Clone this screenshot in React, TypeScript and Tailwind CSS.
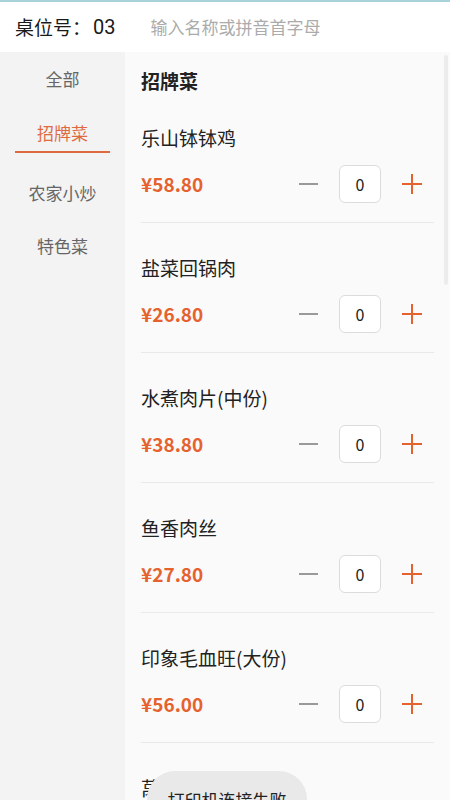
import React from 'react';

const categories = ['全部', '招牌菜', '农家小炒', '特色菜'];

const dishes = [
  { name: '乐山钵钵鸡', price: '58.80' },
  { name: '盐菜回锅肉', price: '26.80' },
  { name: '水煮肉片(中份)', price: '38.80' },
  { name: '鱼香肉丝', price: '27.80' },
  { name: '印象毛血旺(大份)', price: '56.00' },
  { name: '莴笋肉片', price: '32.80' },
];

const font = { fontFamily: '"Noto Sans CJK SC", "Noto Sans", sans-serif' };

export default function App() {
  const active = 1;
  return (
    <div className="relative h-[800px] w-[450px] overflow-hidden bg-[#fafafa]" style={font}>
      {/* Header */}
      <div className="flex h-[52px] items-center border-t-2 border-[#a9d3db] bg-white pl-[15px]">
        <span className="text-[19px] text-[#1a1a1a]">桌位号：</span>
        <span className="ml-[2px] text-[20px] text-[#1a1a1a]" style={{ fontFamily: 'Roboto, sans-serif' }}>03</span>
        <span className="ml-[35px] text-[17px] text-[#ababab]">输入名称或拼音首字母</span>
      </div>

      <div className="flex">
        {/* Category sidebar */}
        <div className="flex h-[748px] w-[125px] shrink-0 flex-col items-center bg-[#f3f3f3]">
          {categories.map((c, i) => (
            <div
              key={c}
              className={`flex h-[53px] w-[95px] items-center justify-center text-[17px] ${
                i === active ? 'text-[#de6a3f]' : 'text-[#666]'
              } ${i === 2 ? 'mt-[8px]' : ''}`}
            >
              {i === active ? (
                <div className="w-[95px] border-b-2 border-[#de6a3f] pt-[10px] pb-[6px] text-center leading-[24px]">
                  {c}
                </div>
              ) : (
                c
              )}
            </div>
          ))}
        </div>

        {/* Dish list */}
        <div className="flex-1 px-4 pt-[17px]">
          <div className="text-[19px] font-bold leading-[24px] text-[#222]">招牌菜</div>
          <div>
            {dishes.map((d) => (
              <div key={d.name} className="border-b border-[#e9e9e9] pt-[33px] pb-[19px]">
                <div className="text-[19px] leading-[24px] text-[#222]">{d.name}</div>
                <div className="mt-[15px] flex h-[38px] items-center">
                  <span className="flex-1 text-[19px] font-bold text-[#e5622f]">¥{d.price}</span>
                  <span className="flex w-[22px] justify-center">
                    <span className="block h-[2px] w-[19px] bg-[#999]" />
                  </span>
                  <div className="ml-[20px] flex h-[38px] w-[42px] items-center justify-center rounded-md border border-[#dcdcdc] bg-white text-[16px] text-[#222]">
                    0
                  </div>
                  <span className="relative ml-[21px] mr-[12px] block h-[20px] w-[20px]">
                    <span className="absolute left-0 top-[9px] block h-[2px] w-[20px] bg-[#e5622f]" />
                    <span className="absolute left-[9px] top-0 block h-[20px] w-[2px] bg-[#e5622f]" />
                  </span>
                </div>
              </div>
            ))}
          </div>
        </div>
      </div>

      {/* Scrollbar */}
      <div className="absolute right-[2px] top-[55px] h-[230px] w-[4px] rounded-full bg-[#ececec]" />

      {/* Toast */}
      <div className="absolute left-[147px] top-[771px] flex h-[56px] w-[160px] items-start justify-center rounded-[28px] bg-[#e9e9e9] pt-[16px]">
        <span className="text-[17px] text-[#222]">打印机连接失败</span>
      </div>
    </div>
  );
}
